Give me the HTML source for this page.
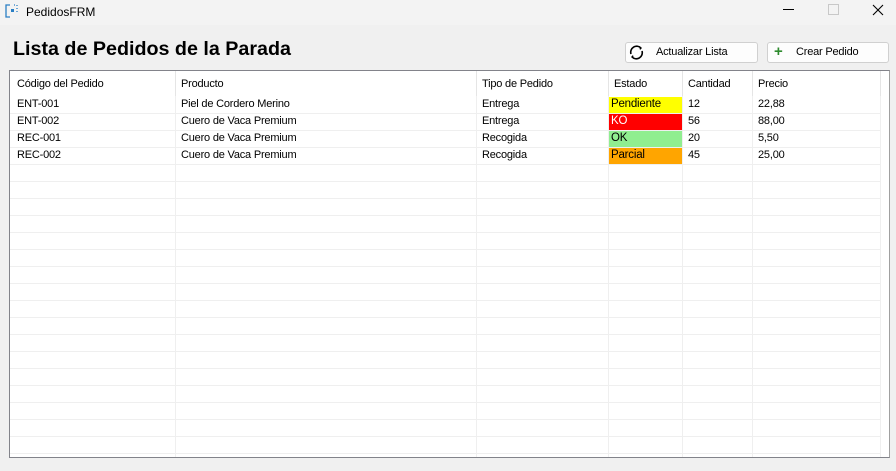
<!DOCTYPE html>
<html><head><meta charset="utf-8"><style>
body{margin:0;width:896px;height:471px;background:#f0f0f0;font-family:"Liberation Sans",sans-serif;position:relative;overflow:hidden}
.tb{position:absolute;left:0;top:0;width:896px;height:25px;background:#f3f3f3}
.t{position:absolute;font-size:11px;letter-spacing:-0.2px;color:#000;white-space:nowrap}
.box{position:absolute;left:9px;top:70px;width:879px;height:386px;border:1px solid #82838a;border-right-color:#a0a0a0;background:#fff;overflow:hidden}
.grid{position:absolute;left:0;top:26px;width:870px;height:360px;background:repeating-linear-gradient(to bottom,transparent 0,transparent 16px,#efefef 16px,#efefef 17px)}
.v{position:absolute;top:0;width:1px;height:386px;background:#efefef}
.btn{position:absolute;top:42px;height:19px;border:1px solid #d0d0d0;border-radius:3px;background:#fdfdfd;font-size:11px;letter-spacing:-0.2px}
.c{position:absolute;height:16px;font-size:11.5px;line-height:14px;padding-left:2px;letter-spacing:-0.2px}
</style></head><body>
<div class="tb"></div>
<svg style="position:absolute;left:5px;top:4px" width="14" height="14" viewBox="0 0 14 14"><path d="M5 1H1V13H5M9 1h1M12 1v1M12 4v1M12 7v1" stroke="#2a7fc4" stroke-width="1.3" fill="none"/><rect x="6" y="5" width="3" height="3" fill="#2a7fc4"/></svg>
<div class="t" style="left:26px;top:5px;font-size:12px;letter-spacing:0">PedidosFRM</div>
<div style="position:absolute;left:783px;top:9px;width:11px;height:1px;background:#000"></div>
<div style="position:absolute;left:828px;top:4px;width:9px;height:9px;border:1px solid #c8c8c8"></div>
<svg style="position:absolute;left:872px;top:4px" width="12" height="12"><path d="M1 1L11 11M11 1L1 11" stroke="#000" stroke-width="1.1"/></svg>
<div class="t" style="left:13px;top:38px;font-size:19.7px;letter-spacing:0;font-weight:bold">Lista de Pedidos de la Parada</div>
<div class="btn" style="left:625px;width:131px">
<svg style="position:absolute;left:2px;top:1px" width="17" height="17" viewBox="0 0 17 17"><path d="M3 10A6 6 0 0 1 13 4M14 7A6 6 0 0 1 4 13" stroke="#000" stroke-width="1.6" fill="none"/><path d="M11 2l3 2-2 2zM6 15l-3-2 2-2z" fill="#000"/></svg>
<span style="position:absolute;left:30px;top:3px">Actualizar Lista</span></div>
<div class="btn" style="left:767px;width:120px">
<span style="position:absolute;left:6px;top:0px;color:#2e8b2e;font-weight:bold;font-size:15px">+</span>
<span style="position:absolute;left:28px;top:3px">Crear Pedido</span></div>
<div class="box">
<div class="grid"></div>
<div class="v" style="left:165px"></div><div class="v" style="left:466px"></div><div class="v" style="left:598px"></div><div class="v" style="left:672px"></div><div class="v" style="left:742px"></div><div class="v" style="left:870px"></div>
<div style="position:absolute;left:0;top:0;width:879px;height:25px;background:#fff"></div>
<div class="v" style="left:165px;height:25px;background:#e5e5e5"></div><div class="v" style="left:466px;height:25px;background:#e5e5e5"></div><div class="v" style="left:598px;height:25px;background:#e5e5e5"></div><div class="v" style="left:672px;height:25px;background:#e5e5e5"></div><div class="v" style="left:742px;height:25px;background:#e5e5e5"></div><div class="v" style="left:870px;height:25px;background:#e5e5e5"></div>
<div class="t" style="left:7px;top:7px">Código del Pedido</div>
<div class="t" style="left:171px;top:7px">Producto</div>
<div class="t" style="left:472px;top:7px">Tipo de Pedido</div>
<div class="t" style="left:604px;top:7px">Estado</div>
<div class="t" style="left:678px;top:7px">Cantidad</div>
<div class="t" style="left:748px;top:7px">Precio</div>
<div class="c" style="left:599px;top:26px;width:71px;background:#ffff00">Pendiente</div>
<div class="c" style="left:599px;top:43px;width:71px;background:#ff0000;color:#fff">KO</div>
<div class="c" style="left:599px;top:60px;width:71px;background:#90ee90">OK</div>
<div class="c" style="left:599px;top:77px;width:71px;background:#ffa500">Parcial</div>
<div class="t" style="left:7px;top:27px">ENT-001</div><div class="t" style="left:171px;top:27px">Piel de Cordero Merino</div><div class="t" style="left:472px;top:27px">Entrega</div><div class="t" style="left:678px;top:27px">12</div><div class="t" style="left:748px;top:27px">22,88</div>
<div class="t" style="left:7px;top:44px">ENT-002</div><div class="t" style="left:171px;top:44px">Cuero de Vaca Premium</div><div class="t" style="left:472px;top:44px">Entrega</div><div class="t" style="left:678px;top:44px">56</div><div class="t" style="left:748px;top:44px">88,00</div>
<div class="t" style="left:7px;top:61px">REC-001</div><div class="t" style="left:171px;top:61px">Cuero de Vaca Premium</div><div class="t" style="left:472px;top:61px">Recogida</div><div class="t" style="left:678px;top:61px">20</div><div class="t" style="left:748px;top:61px">5,50</div>
<div class="t" style="left:7px;top:78px">REC-002</div><div class="t" style="left:171px;top:78px">Cuero de Vaca Premium</div><div class="t" style="left:472px;top:78px">Recogida</div><div class="t" style="left:678px;top:78px">45</div><div class="t" style="left:748px;top:78px">25,00</div>
</div>
</body></html>
